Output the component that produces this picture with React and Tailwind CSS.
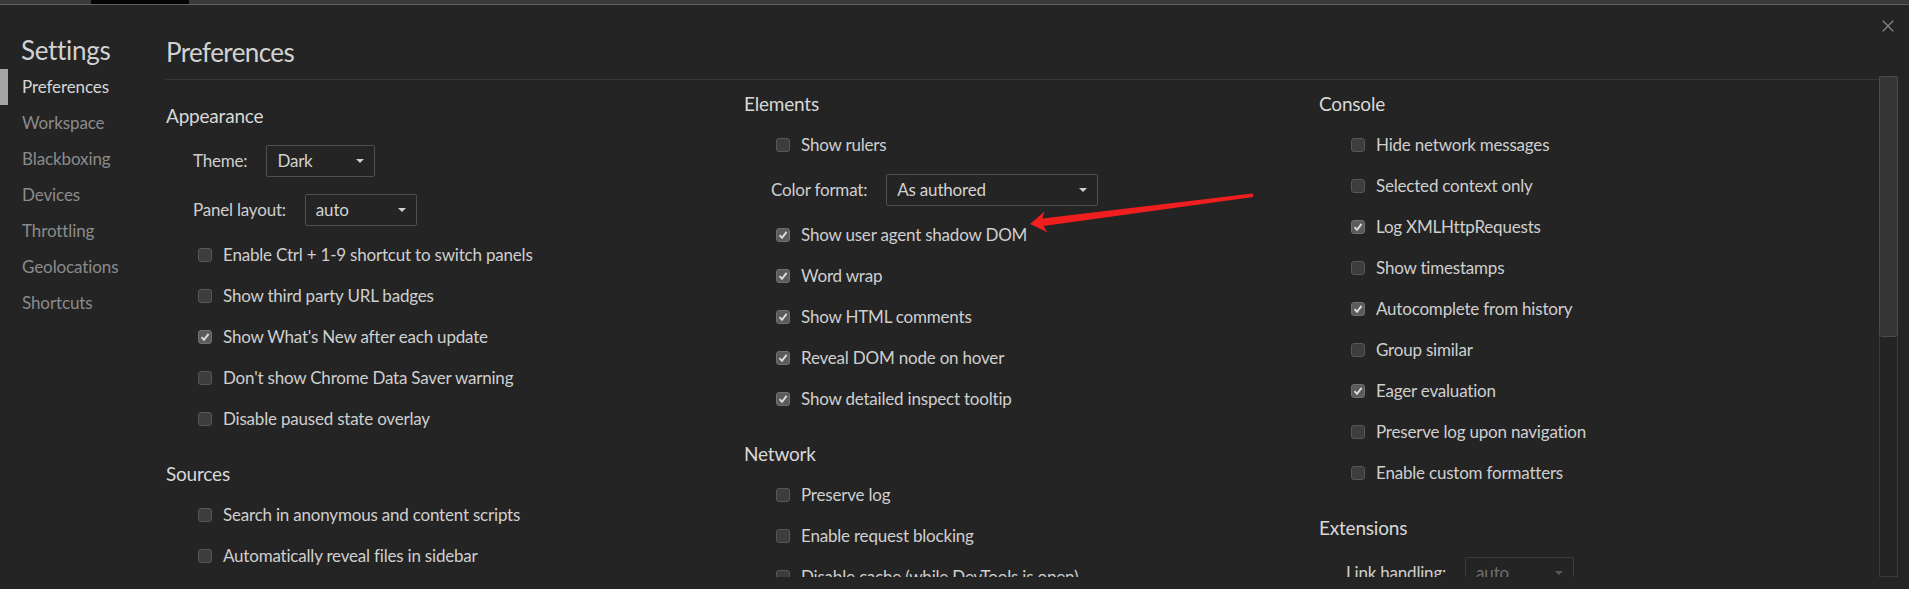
import { X } from "lucide-react";

const sidebar = ["Preferences", "Workspace", "Blackboxing", "Devices", "Throttling", "Geolocations", "Shortcuts"];

const columns = [
  {
    width: "w-[578px]",
    top: "mt-[12px]",
    sections: [
      {
        title: "Appearance",
        items: [
          { select: "Theme:", value: "Dark", w: "w-[109px]" },
          { select: "Panel layout:", value: "auto", w: "w-[112px]" },
          { label: "Enable Ctrl + 1-9 shortcut to switch panels" },
          { label: "Show third party URL badges" },
          { label: "Show What's New after each update", on: true },
          { label: "Don't show Chrome Data Saver warning" },
          { label: "Disable paused state overlay" },
        ],
      },
      {
        title: "Sources",
        items: [
          { label: "Search in anonymous and content scripts" },
          { label: "Automatically reveal files in sidebar" },
          { label: "Enable JavaScript source maps", on: true },
          { label: "Detect indentation", on: true },
        ],
      },
    ],
  },
  {
    width: "w-[575px]",
    top: "mt-0",
    sections: [
      {
        title: "Elements",
        items: [
          { label: "Show rulers" },
          { select: "Color format:", value: "As authored", w: "w-[212px]" },
          { label: "Show user agent shadow DOM", on: true },
          { label: "Word wrap", on: true },
          { label: "Show HTML comments", on: true },
          { label: "Reveal DOM node on hover", on: true },
          { label: "Show detailed inspect tooltip", on: true },
        ],
      },
      {
        title: "Network",
        items: [
          { label: "Preserve log" },
          { label: "Enable request blocking" },
          { label: "Disable cache (while DevTools is open)" },
          { label: "Color-code resource types", on: true },
        ],
      },
    ],
  },
  {
    width: "flex-1",
    top: "mt-0",
    sections: [
      {
        title: "Console",
        items: [
          { label: "Hide network messages" },
          { label: "Selected context only" },
          { label: "Log XMLHttpRequests", on: true },
          { label: "Show timestamps" },
          { label: "Autocomplete from history", on: true },
          { label: "Group similar" },
          { label: "Eager evaluation", on: true },
          { label: "Preserve log upon navigation" },
          { label: "Enable custom formatters" },
        ],
      },
      {
        title: "Extensions",
        items: [{ select: "Link handling:", value: "auto", w: "w-[109px]", disabled: true }],
      },
    ],
  },
];

function Checkbox({ on }) {
  return (
    <span
      className={`w-[14px] h-[14px] rounded-[3px] border flex items-center justify-center shrink-0 ${
        on ? "bg-[#5b5b5b] border-[#707070]" : "bg-[#3d3d3d] border-[#575757]"
      }`}
    >
      {on && (
        <svg width="10" height="10" viewBox="0 0 10 10">
          <path d="M1.5 5.2 L4 7.8 L8.6 1.8" fill="none" stroke="#dcdcdc" strokeWidth="1.9" />
        </svg>
      )}
    </span>
  );
}

function Row({ item }) {
  if (item.select) {
    return (
      <div className="h-[49px] flex items-center ml-[27px]">
        <span className="text-[17px] tracking-[-0.2px] text-[#cfcfcf] mr-[19px]">{item.select}</span>
        <div
          className={`${item.w} h-[32px] rounded-[2px] border flex items-center justify-between pl-[10px] pr-[10px] ${
            item.disabled ? "border-[#3c3c3c] text-[#6f6f6f]" : "border-[#4f4f4f] text-[#d2d2d2]"
          }`}
        >
          <span className="text-[17px] tracking-[-0.2px]">{item.value}</span>
          <span
            className={`w-0 h-0 border-l-[4px] border-r-[4px] border-t-[4px] border-l-transparent border-r-transparent ${
              item.disabled ? "border-t-[#5a5a5a]" : "border-t-[#d0d0d0]"
            }`}
          />
        </div>
      </div>
    );
  }
  return (
    <div className="h-[41px] flex items-center gap-[11px] ml-[32px]">
      <Checkbox on={item.on} />
      <span className="text-[17px] tracking-[-0.2px] text-[#cfcfcf] whitespace-nowrap">{item.label}</span>
    </div>
  );
}

export default function App() {
  return (
    <div
      className="relative w-[1909px] h-[589px] bg-[#242424] overflow-hidden flex flex-col"
      style={{ fontFamily: "Lato, 'Noto Sans', sans-serif" }}
    >
      {/* window strip */}
      <div className="h-[4px] bg-[#3a3a3a] flex">
        <div className="w-[91px]" />
        <div className="w-[98px] bg-[#050505]" />
      </div>
      <div className="h-[1px] bg-[#5f5f5f]" />

      <div className="flex-1 flex min-h-0">
        {/* sidebar */}
        <div className="w-[165px] shrink-0 flex flex-col">
          <div className="h-[64px] pt-[27px] pl-[21px] text-[26px] tracking-[-0.3px] leading-[36px] text-[#d2d2d2]">
            Settings
          </div>
          {sidebar.map((s, i) => (
            <div key={s} className="h-[36px] flex items-center relative">
              {i === 0 && <span className="absolute left-0 top-0 w-[8px] h-[36px] bg-[#a5a5a5]" />}
              <span className={`pl-[22px] text-[17px] tracking-[-0.1px] ${i === 0 ? "text-[#d6d6d6]" : "text-[#8b8b8b]"}`}>
                {s}
              </span>
            </div>
          ))}
        </div>

        {/* main */}
        <div className="flex-1 flex flex-col min-w-0">
          <div className="h-[71px] flex justify-between shrink-0">
            <div className="pt-[29px] pl-[1px] text-[26px] tracking-[-0.6px] leading-[36px] text-[#d2d2d2]">Preferences</div>
            <X size={20} strokeWidth={1.4} className="text-[#8a8a8a] mt-[11px] mr-[11px]" />
          </div>
          <div className="flex-1 flex min-h-0">
            <div className="flex-1 flex flex-col min-w-0">
              <div className="h-[3px]" />
              <div className="flex-1 border-t border-[#363636] overflow-hidden flex pt-[4px]">
                {columns.map((col, ci) => (
                  <div key={ci} className={`${col.width} ${col.top} pl-[1px] shrink-0`}>
                    {col.sections.map((sec, si) => (
                      <div key={sec.title} className={si > 0 ? "mt-[15px]" : ""}>
                        <div className="h-[40px] flex items-center text-[19px] tracking-[-0.2px] text-[#d8d8d8]">
                          {sec.title}
                        </div>
                        {sec.items.map((it, ii) => (
                          <Row key={ii} item={it} />
                        ))}
                      </div>
                    ))}
                  </div>
                ))}
              </div>
            </div>
            {/* scrollbar */}
            <div className="w-[19px] border-l border-r border-b border-[#3a3a3a] flex flex-col">
              <div className="h-[261px] bg-[#353535] border border-[#4c4c4c] rounded-[3px] -mx-[1px]" />
            </div>
            <div className="w-[11px]" />
          </div>
          <div className="h-[12px]" />
        </div>
      </div>

      {/* annotation arrow */}
      <svg className="absolute left-0 top-0 pointer-events-none" width="1909" height="589">
        <polygon
          points="1030,224 1044.6,211.5 1042.3,218.5 1252.8,193.6 1253.2,197 1043.5,226 1047.4,232.3"
          fill="#f01e1e"
        />
      </svg>
    </div>
  );
}
